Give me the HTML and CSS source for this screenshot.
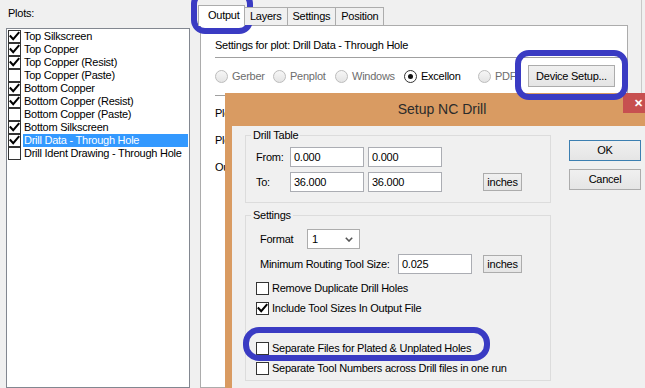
FILE: index.html
```html
<!DOCTYPE html>
<html>
<head>
<meta charset="utf-8">
<link rel="stylesheet" href="styles.css">
</head>
<body>
<div class="main">
  <aside class="plots">
    <div class="plots-label">Plots:</div>
    <div class="listbox">
      <div class="item"><span class="cb"><svg viewBox="0 0 11 11"><path d="M1.5 5.2 L4.2 8.2 L9.6 1.8"/></svg></span><span class="txt">Top Silkscreen</span></div>
      <div class="item"><span class="cb"><svg viewBox="0 0 11 11"><path d="M1.5 5.2 L4.2 8.2 L9.6 1.8"/></svg></span><span class="txt">Top Copper</span></div>
      <div class="item"><span class="cb"><svg viewBox="0 0 11 11"><path d="M1.5 5.2 L4.2 8.2 L9.6 1.8"/></svg></span><span class="txt">Top Copper (Resist)</span></div>
      <div class="item"><span class="cb"></span><span class="txt">Top Copper (Paste)</span></div>
      <div class="item"><span class="cb"><svg viewBox="0 0 11 11"><path d="M1.5 5.2 L4.2 8.2 L9.6 1.8"/></svg></span><span class="txt">Bottom Copper</span></div>
      <div class="item"><span class="cb"><svg viewBox="0 0 11 11"><path d="M1.5 5.2 L4.2 8.2 L9.6 1.8"/></svg></span><span class="txt">Bottom Copper (Resist)</span></div>
      <div class="item"><span class="cb"></span><span class="txt">Bottom Copper (Paste)</span></div>
      <div class="item"><span class="cb"><svg viewBox="0 0 11 11"><path d="M1.5 5.2 L4.2 8.2 L9.6 1.8"/></svg></span><span class="txt">Bottom Silkscreen</span></div>
      <div class="item sel"><span class="cb"><svg viewBox="0 0 11 11"><path d="M1.5 5.2 L4.2 8.2 L9.6 1.8"/></svg></span><span class="txt">Drill Data - Through Hole</span></div>
      <div class="item"><span class="cb"></span><span class="txt">Drill Ident Drawing - Through Hole</span></div>
    </div>
  </aside>
  <section class="tabs">
    <div class="tabstrip">
      <div class="tab active">Output</div>
      <div class="tab">Layers</div>
      <div class="tab">Settings</div>
      <div class="tab">Position</div>
    </div>
    <div class="tabpanel">
      <div class="plot-title">Settings for plot: Drill Data - Through Hole</div>
      <div class="sep"></div>
      <div class="radios">
        <label class="radio disabled w-gerber"><span class="dot"></span>Gerber</label>
        <label class="radio disabled w-penplot"><span class="dot"></span>Penplot</label>
        <label class="radio disabled w-windows"><span class="dot"></span>Windows</label>
        <label class="radio checked w-excellon"><span class="dot"></span>Excellon</label>
        <label class="radio disabled w-pdf"><span class="dot"></span>PDF</label>
        <button class="btn btn-device">Device Setup...</button>
      </div>
      <div class="sep sep2"></div>
      <div class="panel-row first">Plot file name:</div>
      <div class="panel-row">Plot directory:</div>
      <div class="panel-row">Output options:</div>
    </div>
  </section>
  <div class="edge"></div>
</div>

<div class="dialog">
  <div class="titlebar">Setup NC Drill<span class="close">&#x2715;</span></div>
  <div class="client">
    <div class="groups">
      <fieldset class="grp grp-drill">
        <legend>Drill Table</legend>
        <div class="frow">
          <span class="flabel">From:</span>
          <span class="input">0.000</span>
          <span class="input">0.000</span>
        </div>
        <div class="frow">
          <span class="flabel">To:</span>
          <span class="input">36.000</span>
          <span class="input">36.000</span>
          <button class="btn btn-units">inches</button>
        </div>
      </fieldset>
      <fieldset class="grp grp-settings">
        <legend>Settings</legend>
        <div class="srow">
          <span class="slabel fmt">Format</span>
          <span class="select">1<svg viewBox="0 0 8 5"><path d="M0.8 0.8 L4 4 L7.2 0.8"/></svg></span>
        </div>
        <div class="srow">
          <span class="slabel min">Minimum Routing Tool Size:</span>
          <span class="input">0.025</span>
          <button class="btn btn-units">inches</button>
        </div>
        <div class="crow"><span class="cb"></span>Remove Duplicate Drill Holes</div>
        <div class="crow"><span class="cb"><svg viewBox="0 0 11 11"><path d="M1.5 5.2 L4.2 8.2 L9.6 1.8"/></svg></span>Include Tool Sizes In Output File</div>
        <div class="crow gap"><span class="cb"></span>Separate Files for Plated &amp; Unplated Holes</div>
        <div class="crow"><span class="cb"></span>Separate Tool Numbers across Drill files in one run</div>
      </fieldset>
    </div>
    <div class="actions">
      <button class="btn btn-ok">OK</button>
      <button class="btn">Cancel</button>
    </div>
  </div>
</div>

<div class="mark mark-tab"></div>
<div class="mark mark-device"></div>
<div class="mark mark-sep"></div>
</body>
</html>
```

FILE: styles.css
```css
* { box-sizing: border-box; }
html, body { margin: 0; padding: 0; }
body {
  width: 645px;
  height: 388px;
  overflow: hidden;
  position: relative;
  background: #f0f0f0;
  font-family: "Liberation Sans", Arial, sans-serif;
  font-size: 11px;
  line-height: 13px;
  letter-spacing: -0.25px;
  color: #000;
}

.main { display: flex; height: 388px; }

/* left plots list */
.plots { width: 198px; flex: none; display: flex; flex-direction: column; }
.plots-label { height: 28px; padding: 7px 0 0 8px; }
.listbox {
  margin-left: 6px;
  width: 184px;
  flex: 1;
  background: #fff;
  border: 1px solid #828790;
  padding: 1px;
}
.item { display: flex; height: 13px; }
.cb {
  width: 13px; height: 13px; flex: none;
  border: 1px solid #333;
  background: #fff;
  display: flex; align-items: center; justify-content: center;
}
.cb svg { width: 11px; height: 11px; }
.cb svg path { fill: none; stroke: #000; stroke-width: 2; stroke-linecap: square; }
.item .txt { flex: 1; margin-left: 2px; padding-left: 1px; height: 13px; white-space: nowrap; }
.item.sel .txt { background: #3399ff; color: #fff; }

/* tab control */
.tabs { width: 430px; flex: none; display: flex; flex-direction: column; }
.tabstrip { height: 25px; display: flex; align-items: flex-end; position: relative; z-index: 1; }
.tab {
  height: 18px;
  padding: 2px 5px 0 5px;
  border: 1px solid #acacac;
  border-bottom: none;
  background: #f0f0f0;
  margin-left: -1px;
  white-space: nowrap;
}
.tab:first-child { margin-left: 0; }
.tab.active {
  width: 47px;
  height: 21px;
  margin-bottom: -1px;
  padding: 3px 0 0 9px;
  background: #fff;
}
.tabpanel {
  flex: 1;
  margin-left: 2px;
  background: #fff;
  border: 1px solid #acacac;
  padding: 13px 7px 0 14px;
}
.plot-title { height: 13px; white-space: nowrap; }
.sep { border-top: 1px solid #a0a0a0; margin-top: 5px; }
.sep2 { margin-top: 7px; }
.radios { display: flex; align-items: center; height: 24px; margin-top: 6px; white-space: nowrap; }
.radio { display: flex; align-items: center; gap: 4px; flex: none; }
.w-gerber { width: 58px; }
.w-penplot { width: 62px; }
.w-windows { width: 69px; }
.w-excellon { width: 74px; }
.w-pdf { width: 50px; }
.dot {
  width: 13px; height: 13px; border-radius: 50%;
  border: 1px solid #333;
  background: #fff;
  display: flex; align-items: center; justify-content: center;
}
.radio.disabled { color: #6d6d6d; }
.radio.disabled .dot { border-color: #bcbcbc; background: linear-gradient(#f6f6f6, #e4e4e4); }
.radio.checked .dot::after {
  content: ""; width: 5px; height: 5px; border-radius: 50%; background: #111;
}
.panel-row { height: 13px; margin-top: 14px; white-space: nowrap; }
.panel-row.first { margin-top: 11px; }

.edge { width: 14px; flex: none; border-right: 1px solid #c8c8c8; height: 95px; }

/* buttons */
.btn {
  font: inherit;
  letter-spacing: inherit;
  color: #000;
  border: 1px solid #acacac;
  background: linear-gradient(#f0f0f0, #e5e5e5);
  padding: 0;
  height: 21px;
  white-space: nowrap;
}
.btn-device { width: 87px; height: 22px; }

/* dialog */
.dialog {
  position: absolute;
  left: 225px;
  top: 93px;
  width: 434px;
  height: 300px;
  background: #d99b62;
  padding: 0 7px;
  display: flex;
  flex-direction: column;
}
.titlebar {
  height: 33px;
  flex: none;
  position: relative;
  display: flex;
  align-items: center;
  justify-content: center;
  font-size: 14px;
  letter-spacing: 0;
  color: #2b2b2b;
}
.close {
  position: absolute;
  top: 0;
  right: -2px;
  width: 31px;
  height: 20px;
  background: #c75050;
  color: #fff;
  font-size: 11px;
  font-weight: bold;
  display: flex;
  align-items: center;
  justify-content: center;
}
.client {
  flex: 1;
  background: #f0f0f0;
  display: flex;
  gap: 18px;
  padding: 3px 0 0 13px;
}
.groups { width: 306px; flex: none; display: flex; flex-direction: column; gap: 6px; }
.grp {
  margin: 0;
  min-width: 0;
  border: 1px solid #dcdcdc;
  padding: 5px 0 10px 10px;
}
.grp legend { padding: 0 2px; margin-left: -5px; line-height: 13px; }
.grp-settings { padding: 7px 0 2px 10px; }

.frow { display: flex; align-items: center; height: 20px; }
.frow + .frow { margin-top: 5px; }
.flabel { width: 34px; flex: none; }
.input {
  width: 74px; height: 20px; flex: none;
  border: 1px solid #abadb3;
  background: #fff;
  padding: 3px 0 0 3px;
  white-space: nowrap;
}
.input + .input { margin-left: 4px; }
.btn-units { width: 39px; height: 18px; margin-left: 41px; }

.srow { display: flex; align-items: center; height: 20px; padding-left: 4px; }
.srow + .srow { margin-top: 5px; }
.slabel.fmt { width: 47px; }
.slabel.min { width: 138px; white-space: nowrap; }
.srow .btn-units { margin-left: 11px; }
.select {
  width: 53px; height: 20px;
  border: 1px solid #acacac;
  background: #fff;
  display: flex; align-items: center; justify-content: space-between;
  padding: 0 6px 0 4px;
}
.select svg { width: 8px; height: 5px; }
.select svg path { fill: none; stroke: #555; stroke-width: 1.6; }

.crow { display: flex; align-items: center; gap: 3px; height: 20px; white-space: nowrap; }
.srow + .crow { margin-top: 4px; }
.crow.gap { margin-top: 20px; }

.actions { width: 72px; flex: none; display: flex; flex-direction: column; gap: 8px; padding-top: 11px; }
.actions .btn { width: 72px; height: 21px; }
.btn-ok { border-color: #3c7fb1; }

/* blue annotation marks */
.mark {
  position: absolute;
  border: 6px solid #3a3bc3;
  border-radius: 14px;
  pointer-events: none;
}
.mark-tab { left: 191px; top: -10px; width: 62px; height: 44px; }
.mark-device { left: 515px; top: 50px; width: 113px; height: 50px; }
.mark-sep { left: 243px; top: 327px; width: 247px; height: 34px; border-radius: 16px; }
```
